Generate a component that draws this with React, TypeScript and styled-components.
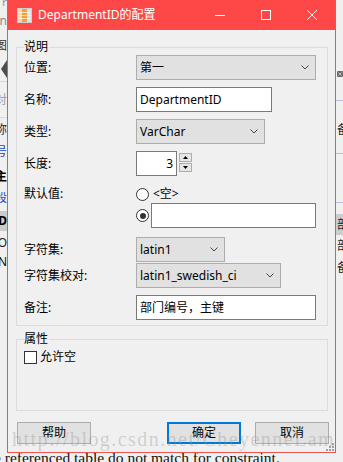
import React from "react";
import styled, { createGlobalStyle } from "styled-components";

const Global = createGlobalStyle`
  html, body { margin: 0; padding: 0; background: #f0f0f0; }
  * { box-sizing: border-box; }
`;

const UI_FONT = `"Noto Sans", "Noto Sans CJK SC", sans-serif`;

const Screen = styled.div`
  position: relative;
  width: 343px;
  height: 462px;
  overflow: hidden;
  background: #f0f0f0;
  font-family: ${UI_FONT};
  font-size: 12px;
  color: #000;
`;

/* ---------- background application (visible around the dialog) ---------- */
const Backdrop = styled.div`
  display: grid;
  grid-template-columns: 7px 1fr 7px;
  grid-template-rows: 450px 12px;
  height: 462px;
`;

const Strip = styled.div`
  display: flex;
  flex-direction: column;
  overflow: hidden;
  background: #f0f0f0;
`;

const StripRow = styled.div<{ $h: number; $bg?: string; $line?: string; $end?: boolean }>`
  flex: none;
  height: ${(p) => p.$h}px;
  display: flex;
  align-items: center;
  justify-content: ${(p) => (p.$end ? "flex-end" : "flex-start")};
  background: ${(p) => p.$bg ?? "transparent"};
  border-bottom: ${(p) => (p.$line ? `1px solid ${p.$line}` : "none")};
  overflow: hidden;
`;

const Frag = styled.span<{ $color?: string; $bold?: boolean; $ml?: number }>`
  flex: none;
  font-size: 12px;
  line-height: 14px;
  white-space: nowrap;
  color: ${(p) => p.$color ?? "#111"};
  font-weight: ${(p) => (p.$bold ? 700 : 400)};
  margin-left: ${(p) => p.$ml ?? 0}px;
`;

const BottomLine = styled.div`
  grid-column: 1 / -1;
  font-family: "Liberation Serif", serif;
  font-size: 15.5px;
  line-height: 15.5px;
  white-space: nowrap;
  color: #111;
  margin-left: -6px;
`;

type StripItem = { h: number; text?: string; color?: string; bold?: boolean; bg?: string; line?: string; shape?: "back" | "close" };

const leftItems: StripItem[] = [
  { h: 6, text: "r", color: "#999" },
  { h: 30, text: "n", color: "#8a8a8a" },
  { h: 20, text: "图", color: "#333" },
  { h: 26, shape: "back", line: "#d6d6d6" },
  { h: 36, text: "对", color: "#a0a0a0", line: "#dadada" },
  { h: 24, text: "称", color: "#1c2244" },
  { h: 20, text: "号", color: "#2447c8" },
  { h: 30, text: "主", color: "#000", bold: true },
  { h: 12, text: "段", color: "#2447c8" },
  { h: 7 },
  { h: 20, text: "D", color: "#000", bold: true, bg: "#cbcbcb" },
  { h: 24, text: "O", color: "#222" },
  { h: 14, text: "N", color: "#111" },
];

const rightItems: StripItem[] = [
  { h: 64 },
  { h: 20, shape: "close" },
  { h: 17, line: "#b8c0d0" },
  { h: 17 },
  { h: 24, text: "备", color: "#222" },
  { h: 12, line: "#b8c0d0" },
  { h: 49, line: "#b8c0d0" },
  { h: 11 },
  { h: 21, text: "部", color: "#222", bg: "#cdcdcd" },
  { h: 21, text: "部", color: "#222" },
  { h: 24, text: "备", color: "#222" },
];

function StripShape({ kind }: { kind: "back" | "close" }) {
  if (kind === "back") {
    return (
      <svg width="7" height="18" viewBox="0 0 7 18">
        <polygon points="7,0 7,18 1,9" fill="#4e4e4e" />
      </svg>
    );
  }
  return (
    <svg width="12" height="12" viewBox="0 0 12 12" style={{ marginLeft: 1 }}>
      <rect x="0" y="0" width="12" height="12" rx="2" fill="#6a6a6a" />
      <path d="M3 3L9 9M9 3L3 9" stroke="#e0e0e0" strokeWidth="1.5" />
    </svg>
  );
}

function BackgroundStrip({ items, side }: { items: StripItem[]; side: "left" | "right" }) {
  return (
    <Strip>
      {items.map((it, i) => (
        <StripRow key={i} $h={it.h} $bg={it.bg} $line={it.line} $end={side === "left"}>
          {it.shape ? (
            <StripShape kind={it.shape} />
          ) : it.text ? (
            <Frag $color={it.color} $bold={it.bold} $ml={side === "right" ? 1 : 0}>
              {it.text}
            </Frag>
          ) : null}
        </StripRow>
      ))}
    </Strip>
  );
}

/* ---------- dialog window ---------- */
const Window = styled.div`
  position: absolute;
  left: 7px;
  top: 0;
  width: 329px;
  height: 453px;
  display: flex;
  flex-direction: column;
  background: #f0f0f0;
  border: 1px solid #ec5450;
  border-top: none;
`;

const TitleBar = styled.div`
  flex: none;
  height: 30px;
  display: flex;
  align-items: center;
  padding-left: 9px;
  background: #fe4747;
  color: #fff;
`;

const TitleText = styled.span`
  margin-left: 6px;
  font-size: 12px;
  line-height: 16px;
  white-space: nowrap;
`;

const CaptionButtons = styled.div`
  margin-left: auto;
  display: flex;
  height: 30px;
`;

const CaptionButton = styled.div`
  width: 46px;
  height: 30px;
  display: flex;
  align-items: center;
  justify-content: center;
`;

const Body = styled.div`
  flex: 1;
  display: flex;
  flex-direction: column;
  padding: 17px 7px 0 8px;
`;

const GroupBox = styled.div<{ $h?: number; $mt?: number }>`
  border: 1px solid #dcdcdc;
  padding: 0 6px 5px 7px;
  margin-top: ${(p) => p.$mt ?? 0}px;
  ${(p) => (p.$h ? `height: ${p.$h}px;` : "")}
`;

const GroupCaption = styled.div`
  width: fit-content;
  margin-top: -9px;
  padding-right: 1px;
  background: #f0f0f0;
  font-size: 12px;
  line-height: 16px;
`;

const FieldRow = styled.div<{ $mt: number; $top?: boolean }>`
  display: flex;
  align-items: ${(p) => (p.$top ? "flex-start" : "center")};
  margin-top: ${(p) => p.$mt}px;
`;

const FieldLabel = styled.div<{ $lh?: number }>`
  flex: none;
  width: 112px;
  font-size: 12px;
  line-height: ${(p) => p.$lh ?? 16}px;
  white-space: nowrap;
`;

const Combo = styled.div<{ $w: number }>`
  flex: none;
  width: ${(p) => p.$w}px;
  height: 25px;
  display: flex;
  align-items: center;
  padding-left: 3px;
  padding-right: 6px;
  background: #e1e1e1;
  border: 1px solid #adadad;
`;

const ComboText = styled.span`
  flex: 1;
  font-size: 12px;
  line-height: 16px;
  white-space: nowrap;
`;

const TextBox = styled.div<{ $w: number; $right?: boolean; $ml?: number }>`
  flex: none;
  width: ${(p) => p.$w}px;
  height: 25px;
  margin-left: ${(p) => p.$ml ?? 0}px;
  display: flex;
  align-items: center;
  justify-content: ${(p) => (p.$right ? "flex-end" : "flex-start")};
  padding: 0 3px;
  background: #fff;
  border: 1px solid #7a7a7a;
  font-size: 12px;
  line-height: 16px;
  white-space: nowrap;
`;

const SpinWrap = styled.div`
  display: flex;
  align-items: flex-start;
`;

const SpinColumn = styled.div`
  display: flex;
  flex-direction: column;
  gap: 1px;
  margin: 2px 0 0 2px;
`;

const SpinButton = styled.div`
  width: 13px;
  height: 9px;
  display: flex;
  align-items: center;
  justify-content: center;
  background: #e6e6e6;
  border: 1px solid #adadad;
`;

const RadioStack = styled.div`
  display: flex;
  flex-direction: column;
`;

const RadioLine = styled.div<{ $h: number }>`
  height: ${(p) => p.$h}px;
  display: flex;
  align-items: center;
`;

const RadioCircle = styled.span`
  flex: none;
  width: 13px;
  height: 13px;
  border-radius: 50%;
  border: 1px solid #333;
  background: #fff;
  display: flex;
  align-items: center;
  justify-content: center;
`;

const RadioDot = styled.span`
  width: 6px;
  height: 6px;
  border-radius: 50%;
  background: #333;
`;

const InlineText = styled.span<{ $ml: number }>`
  margin-left: ${(p) => p.$ml}px;
  font-size: 12px;
  line-height: 16px;
  white-space: nowrap;
`;

const CheckLine = styled.div`
  height: 20px;
  display: flex;
  align-items: center;
`;

const Checkbox = styled.span`
  flex: none;
  width: 13px;
  height: 13px;
  border: 1px solid #333;
  background: #fff;
`;

const ButtonRow = styled.div`
  display: flex;
  margin: 11px -1px 0 1px;
`;

const Spacer = styled.div`
  flex: 1;
`;

const DialogButton = styled.div<{ $primary?: boolean; $ml?: number }>`
  flex: none;
  width: 74px;
  height: 22px;
  margin-left: ${(p) => p.$ml ?? 0}px;
  display: flex;
  align-items: center;
  justify-content: center;
  background: #e1e1e1;
  border: ${(p) => (p.$primary ? "2px solid #0078d7" : "1px solid #adadad")};
  font-size: 12px;
  line-height: 16px;
`;

const Grip = styled.div`
  position: absolute;
  right: 1px;
  bottom: 1px;
  display: flex;
`;

const Watermark = styled.div`
  position: absolute;
  left: 12px;
  top: 429px;
  font-family: "Liberation Serif", serif;
  font-size: 20px;
  line-height: 20px;
  letter-spacing: 1.45px;
  white-space: nowrap;
  color: rgba(150, 150, 150, 0.38);
  pointer-events: none;
`;

const Chevron = () => (
  <svg width="8" height="5" viewBox="0 0 8 5">
    <polyline points="0.5,0.5 4,4 7.5,0.5" fill="none" stroke="#444" strokeWidth="1" />
  </svg>
);

const Triangle = ({ up }: { up?: boolean }) => (
  <svg width="5" height="3" viewBox="0 0 5 3">
    <polygon points={up ? "2.5,0 5,3 0,3" : "0,0 5,0 2.5,3"} fill="#000" />
  </svg>
);

const AppIcon = () => (
  <svg width="15" height="15" viewBox="0 0 15 15">
    <rect x="0.5" y="0.5" width="14" height="14" fill="#fff" stroke="#cfcfcf" />
    <rect x="1" y="1" width="4" height="13" fill="#f8d8b2" />
    <rect x="5" y="1" width="5" height="13" fill="#f2a23a" />
    <rect x="10" y="1" width="4" height="13" fill="#dbe3f3" />
    <path d="M1 4.5h13M1 7.5h13M1 10.5h13" stroke="#ffffff" strokeOpacity="0.6" />
  </svg>
);

function ComboBox({ w, value }: { w: number; value: string }) {
  return (
    <Combo $w={w}>
      <ComboText>{value}</ComboText>
      <Chevron />
    </Combo>
  );
}

export default function App() {
  return (
    <>
      <Global />
      <Screen>
        <Backdrop>
          <BackgroundStrip items={leftItems} side="left" />
          <div />
          <BackgroundStrip items={rightItems} side="right" />
          <BottomLine>e referenced table do not match for constraint.</BottomLine>
        </Backdrop>

        <Window>
          <TitleBar>
            <AppIcon />
            <TitleText>DepartmentID的配置</TitleText>
            <CaptionButtons>
              <CaptionButton>
                <svg width="10" height="10" viewBox="0 0 10 10">
                  <path d="M0 5.5h10" stroke="#fff" strokeWidth="1" />
                </svg>
              </CaptionButton>
              <CaptionButton>
                <svg width="10" height="10" viewBox="0 0 10 10">
                  <rect x="0.5" y="0.5" width="9" height="9" fill="none" stroke="#fff" strokeWidth="1" />
                </svg>
              </CaptionButton>
              <CaptionButton>
                <svg width="10" height="10" viewBox="0 0 10 10">
                  <path d="M0 0L10 10M10 0L0 10" stroke="#fff" strokeWidth="1" />
                </svg>
              </CaptionButton>
            </CaptionButtons>
          </TitleBar>

          <Body>
            <GroupBox>
              <GroupCaption>说明</GroupCaption>
              <FieldRow $mt={0}>
                <FieldLabel>位置:</FieldLabel>
                <ComboBox w={180} value="第一" />
              </FieldRow>
              <FieldRow $mt={7}>
                <FieldLabel>名称:</FieldLabel>
                <TextBox $w={136}>DepartmentID</TextBox>
              </FieldRow>
              <FieldRow $mt={7}>
                <FieldLabel>类型:</FieldLabel>
                <ComboBox w={129} value="VarChar" />
              </FieldRow>
              <FieldRow $mt={7}>
                <FieldLabel>长度:</FieldLabel>
                <SpinWrap>
                  <TextBox $w={41} $right>3</TextBox>
                  <SpinColumn>
                    <SpinButton>
                      <Triangle up />
                    </SpinButton>
                    <SpinButton>
                      <Triangle />
                    </SpinButton>
                  </SpinColumn>
                </SpinWrap>
              </FieldRow>
              <FieldRow $mt={9} $top>
                <FieldLabel $lh={18}>默认值:</FieldLabel>
                <RadioStack>
                  <RadioLine $h={18}>
                    <RadioCircle />
                    <InlineText $ml={4}>&lt;空&gt;</InlineText>
                  </RadioLine>
                  <RadioLine $h={25}>
                    <RadioCircle>
                      <RadioDot />
                    </RadioCircle>
                    <TextBox $w={165} $ml={2} />
                  </RadioLine>
                </RadioStack>
              </FieldRow>
              <FieldRow $mt={9}>
                <FieldLabel>字符集:</FieldLabel>
                <ComboBox w={89} value="latin1" />
              </FieldRow>
              <FieldRow $mt={1}>
                <FieldLabel>字符集校对:</FieldLabel>
                <ComboBox w={145} value="latin1_swedish_ci" />
              </FieldRow>
              <FieldRow $mt={7}>
                <FieldLabel>备注:</FieldLabel>
                <TextBox $w={180}>部门编号，主键</TextBox>
              </FieldRow>
            </GroupBox>

            <GroupBox $mt={13} $h={72}>
              <GroupCaption>属性</GroupCaption>
              <CheckLine>
                <Checkbox />
                <InlineText $ml={3}>允许空</InlineText>
              </CheckLine>
            </GroupBox>

            <ButtonRow>
              <DialogButton>帮助</DialogButton>
              <Spacer />
              <DialogButton $primary>确定</DialogButton>
              <DialogButton $ml={14}>取消</DialogButton>
            </ButtonRow>
          </Body>

          <Grip>
            <svg width="8" height="8" viewBox="0 0 8 8">
              <g fill="#a0a0a0">
                <rect x="6" y="0" width="2" height="2" />
                <rect x="3" y="3" width="2" height="2" />
                <rect x="6" y="3" width="2" height="2" />
                <rect x="0" y="6" width="2" height="2" />
                <rect x="3" y="6" width="2" height="2" />
                <rect x="6" y="6" width="2" height="2" />
              </g>
            </svg>
          </Grip>
        </Window>

        <Watermark>http://blog.csdn.net/CheyenneLam</Watermark>
      </Screen>
    </>
  );
}
